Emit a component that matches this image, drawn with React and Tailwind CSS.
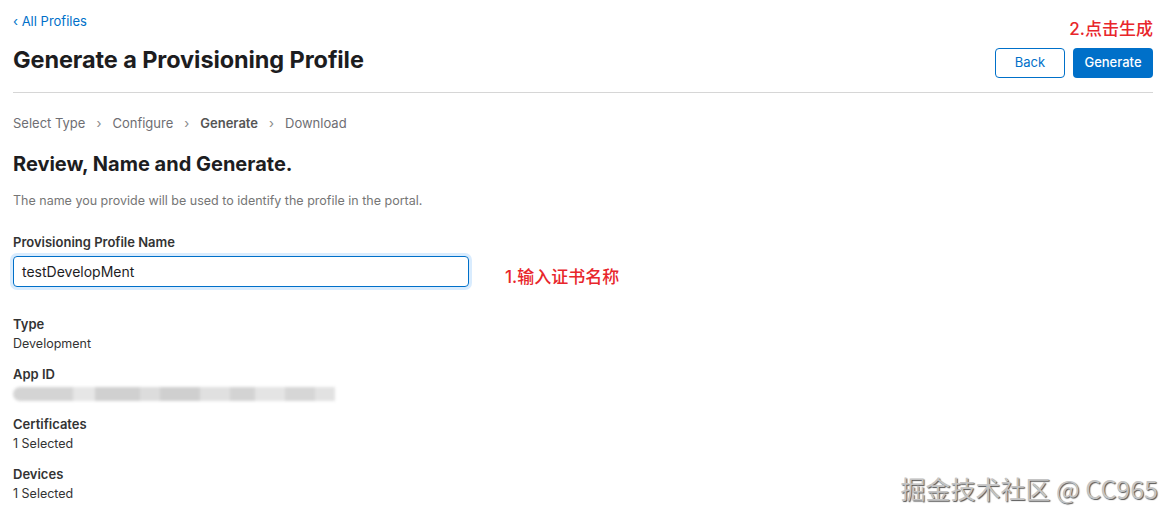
import React from 'react';

function Field({ label, value }) {
  return (
    <div className="flex flex-col">
      <span className="text-[13px] font-semibold leading-[19px] text-[#333]">{label}</span>
      <span className="text-[12.5px] leading-[19px] text-[#333]">{value}</span>
    </div>
  );
}

export default function App() {
  const cjk = { fontFamily: 'Inter, "Noto Sans CJK SC", sans-serif' };
  return (
    <div className="relative min-h-[517px] w-[1176px] bg-white pl-[13px] pr-[23px] pt-[12px]" style={cjk}>
      <a className="block text-[13px] leading-[18px] text-[#0070c9]">‹ All Profiles</a>

      <div className="mt-[15px] flex items-end justify-between border-b border-[#d6d6d6] pb-[14px]">
        <h1 className="mb-[3px] text-[23.5px] font-bold leading-[30px] tracking-[-0.1px] text-[#1d1d1f]">
          Generate a Provisioning Profile
        </h1>
        <div className="relative flex gap-[8px]">
          <span className="absolute bottom-full right-0 mb-[9px] whitespace-nowrap text-[17px] font-medium leading-[20px] text-[#e8262b]">
            2.点击生成
          </span>
          <button className="h-[30px] w-[70px] rounded-[4px] border border-[#0070c9] bg-white text-[13px] text-[#0070c9]">
            Back
          </button>
          <button className="h-[30px] w-[80px] rounded-[4px] bg-[#0070c9] text-[13px] font-medium text-white">
            Generate
          </button>
        </div>
      </div>

      <div className="mt-[21px] flex items-center gap-[11px] text-[13px] leading-[18px] text-[#6e6e73]">
        <span>Select Type</span>
        <span className="text-[#888]">›</span>
        <span>Configure</span>
        <span className="text-[#888]">›</span>
        <span className="font-semibold text-[#555]">Generate</span>
        <span className="text-[#888]">›</span>
        <span>Download</span>
      </div>

      <h2 className="mt-[20px] text-[20px] font-bold leading-[24px] text-[#1d1d1f]">Review, Name and Generate.</h2>

      <p className="mt-[17px] text-[12.5px] leading-[16px] text-[#767676]">
        The name you provide will be used to identify the profile in the portal.
      </p>

      <div className="mt-[25px] text-[13px] font-semibold leading-[17px] text-[#333]">Provisioning Profile Name</div>
      <div className="mt-[5px] flex items-start">
        <div className="flex h-[31px] w-[456px] items-center rounded-[4px] border border-[#0070c9] px-[8px] text-[14px] text-[#1d1d1f] shadow-[0_0_0_3px_rgba(0,125,250,0.15)]">
          testDevelopMent
        </div>
        <span className="ml-[36px] mt-[11px] text-[17px] font-medium leading-[20px] text-[#e8262b]">1.输入证书名称</span>
      </div>

      <div className="mt-[28px] flex flex-col gap-[12px]">
        <Field label="Type" value="Development" />
        <div className="flex flex-col pb-[2px]">
          <span className="text-[13px] font-semibold leading-[19px] text-[#333]">App ID</span>
          <div className="mt-[3px] flex h-[14px] w-[322px] overflow-hidden rounded-l-full blur-[1.5px]">
            <div className="w-[60px] bg-[#d4d4d4]" />
            <div className="w-[22px] bg-[#e6e6e6]" />
            <div className="w-[45px] bg-[#d0d0d0]" />
            <div className="w-[20px] bg-[#dcdcdc]" />
            <div className="w-[40px] bg-[#cfcfcf]" />
            <div className="w-[30px] bg-[#e0e0e0]" />
            <div className="w-[25px] bg-[#d3d3d3]" />
            <div className="w-[30px] bg-[#e4e4e4]" />
            <div className="w-[30px] bg-[#d6d6d6]" />
            <div className="flex-1 bg-[#e2e2e2]" />
          </div>
        </div>
        <Field label="Certificates" value="1 Selected" />
        <Field label="Devices" value="1 Selected" />
      </div>

      <div
        className="absolute bottom-[14px] right-[18px] text-[25px] leading-[30px] text-[#c4c4c4]"
        style={{ textShadow: '1px 1px 1px #555', fontFamily: '"Noto Sans CJK SC", Inter, sans-serif' }}
      >
        掘金技术社区 @ CC965
      </div>
    </div>
  );
}
